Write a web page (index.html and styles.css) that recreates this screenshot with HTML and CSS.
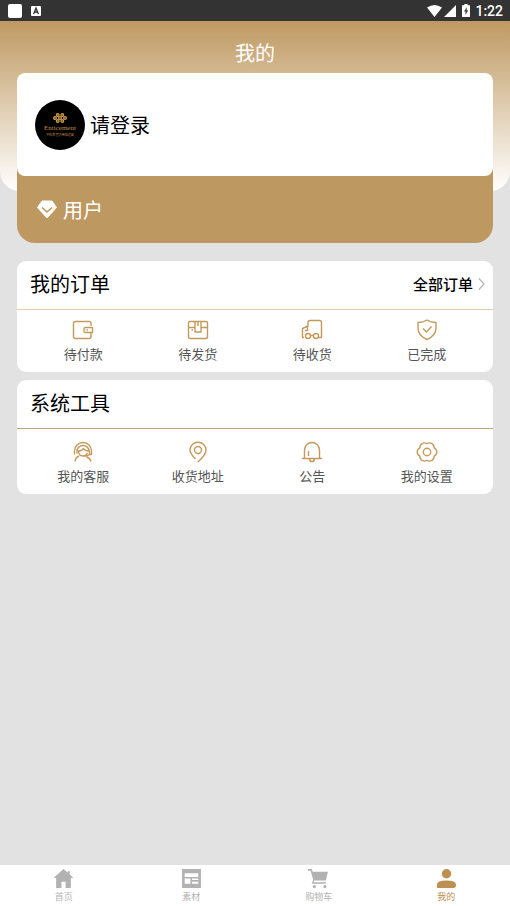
FILE: index.html
```html
<!DOCTYPE html>
<html lang="zh-CN">
<head>
<meta charset="utf-8">
<meta name="viewport" content="width=device-width, initial-scale=1">
<title>我的</title>
<link rel="stylesheet" href="styles.css">
</head>
<body>
<div class="status">
  <div class="status-group">
    <span class="status-app"></span>
    <svg width="10" height="10" viewBox="0 0 10 10"><rect width="10" height="10" rx="1" fill="#fff"/><path d="M2.6 8 5 2l2.4 6M3.5 6h3" fill="none" stroke="#333" stroke-width="1.3"/></svg>
  </div>
  <div class="status-group status-right">
    <svg width="30" height="14" viewBox="0 0 30 14" fill="#fff"><path d="M0 3.6Q7.5-1.8 15 3.6L7.5 13ZM17 13 29 1v12Z"/></svg>
    <svg width="8" height="13" viewBox="0 0 8 13"><path d="M2.3 0h3.4v1.3H8V13H0V1.300h2.300Z" fill="#fff"/><path d="M5 3 2 7.500h1.700L3.200 11 6.200 6.500H4.500Z" fill="#333"/></svg>
    <span class="clock">1:22</span>
  </div>
</div>

<header class="hero"><h1>我的</h1></header>

<main>
  <section class="profile">
    <a class="login" href="#login">
      <span class="avatar">
        <svg width="14" height="10" viewBox="0 0 14 10" fill="#5a4018" stroke="#d0a050" stroke-width="1.1"><circle cx="4.700" cy="2" r="1.400"/><circle cx="9.300" cy="2" r="1.400"/><circle cx="2" cy="5" r="1.400"/><circle cx="7" cy="5" r="1.500"/><circle cx="12" cy="5" r="1.400"/><circle cx="4.700" cy="8" r="1.400"/><circle cx="9.300" cy="8" r="1.400"/></svg>
        <span class="brand">Enticement</span>
        <span class="brand-sub">中科美 官方商城运营</span>
      </span>
      <span>请登录</span>
    </a>
    <div class="level">
      <svg width="20" height="19" viewBox="0 0 20 19"><path d="M5 1h10l4.500 6.500L10 18 .5 7.500Z" fill="#fff" stroke="#fff" stroke-linejoin="round"/><path d="m5 7.500 5 4.500 5-4.500" fill="none" stroke="#bd9860" stroke-width="1.600"/></svg>
      <span>用户</span>
    </div>
  </section>

  <section class="card">
    <div class="card-head">
      <h2>我的订单</h2>
      <a class="more" href="#orders">全部订单
        <svg width="7" height="12" viewBox="0 0 7 12"><path d="m1 .5 5 5.500-5 5.500" fill="none" stroke="#b5b5b5" stroke-width="1.200"/></svg>
      </a>
    </div>
    <div class="grid">
      <a href="#pay"><svg class="icon" viewBox="0 0 22 22"><path d="M19 7V4.500Q19 2.500 17 2.500H3.500Q1.500 2.500 1.500 4.500v13Q1.500 19.500 3.500 19.500H17q2 0 2-2V14M13.500 8.500h7v5h-7q-1.500 0-1.500-1.500v-2q0-1.500 1.500-1.500ZM14.500 11h1.500"/></svg>待付款</a>
      <a href="#ship"><svg class="icon" viewBox="0 0 22 22"><path d="M3 2.500h16q1.500 0 1.500 1.500v14q0 1.500-1.500 1.500H3q-1.500 0-1.500-1.500V4Q1.500 2.500 3 2.500ZM1.500 8.500H8m6 0h6.500M8 2.500V13h6V2.500M11 2.500V7M4.500 11h1.500"/></svg>待发货</a>
      <a href="#receive"><svg class="icon" viewBox="0 0 22 22"><path d="M3 18.500H1.500V9.500L7 7V3.500Q7 1.500 9 1.500h9.500q2 0 2 2v15H18M9.800 16.500h2.400M6.500 7.500v4H4"/><circle cx="7" cy="17" r="2.500"/><circle cx="15" cy="17" r="2.500"/></svg>待收货</a>
      <a href="#done"><svg class="icon" viewBox="0 0 22 22"><path d="M11 1Q15 3.500 20 3.500V9q0 7.500-9 11.500Q2 16.500 2 9V3.500Q7 3.500 11 1ZM7 9.500l3.500 3.500L15.500 7.500"/></svg>已完成</a>
    </div>
  </section>

  <section class="card tools">
    <div class="card-head"><h2>系统工具</h2></div>
    <div class="grid">
      <a href="#service"><svg class="icon" viewBox="0 0 22 22"><path d="M2.500 13.500V10a8.500 8.500 0 0 1 17 0v3.500H17.500V10M5 12.500V10a6 5.500 0 0 1 12 0q-4 0-5.500-2.500Q10 10 6.500 10q0 5 4.500 5 3 0 4.500-3M17.500 13.500q-2 2-5.500 1.500M3 20.500q.5-4 4-5.500M14.500 16q3.500 1 4.500 4.500"/></svg>我的客服</a>
      <a href="#address"><svg class="icon" viewBox="0 0 22 22"><path d="M8.500 18Q3 12.500 3 9a8 7.800 0 0 1 16 0Q19 13.500 11 21"/><circle cx="11" cy="9" r="3.500"/></svg>收货地址</a>
      <a href="#notice"><svg class="icon" viewBox="0 0 22 22"><path d="M1 17.500h20M3.500 17.500V9a7.500 7.500 0 0 1 15 0v8.500M8.500 18q.5 2.700 2.500 2.700t2.500-2.700M7.500 10v5"/></svg>公告</a>
      <a href="#settings"><svg class="icon" viewBox="0 0 22 22"><path d="M11 2.800A4.500 4.500 0 0 1 18.100 6.900 4.500 4.500 0 0 1 18.100 15.100 4.500 4.500 0 0 1 11 19.200 4.500 4.500 0 0 1 3.900 15.100 4.500 4.500 0 0 1 3.900 6.900 4.500 4.500 0 0 1 11 2.800Z"/><circle cx="11" cy="11" r="3.700"/></svg>我的设置</a>
    </div>
  </section>
</main>

<nav class="tabs">
  <a href="#home"><svg viewBox="0 0 20 20"><path d="M10 1 .5 9.500H3V19h5v-6h4v6h5V9.500h2.500L16 6.300V3h-2v1.500Z"/></svg>首页</a>
  <a href="#material"><svg viewBox="0 0 20 20"><path fill-rule="evenodd" d="M1 1h18v18H1ZM3.500 5v3.500h13V5ZM3.500 10v5h5.500v-5ZM10.500 10v1.500h6V10ZM10.500 13v2h6v-2Z"/></svg>素材</a>
  <a href="#cart"><svg viewBox="0 0 20 20"><path d="M0 1h3.500l1 2.500H19L17 12H6l-.5 1.500H17V15H3.500L5 11.500 2.500 2.500H0Z"/><circle cx="6" cy="17.700" r="1.500"/><circle cx="16" cy="17.700" r="1.500"/></svg>购物车</a>
  <a class="active" href="#mine" aria-current="page"><svg viewBox="0 0 20 20"><circle cx="10" cy="5.500" r="4.500"/><path d="M1 19v-3q0-4 9-4t9 4v1q0 2-2 2Z"/></svg>我的</a>
</nav>
</body>
</html>
```
FILE: styles.css
```css
* {
  box-sizing: border-box;
}

body {
  margin: 0;
  min-height: 100vh;
  display: flex;
  flex-direction: column;
  background: #e2e2e2;
  color: #000;
  font-family: "Noto Sans CJK SC", sans-serif;
}

a {
  color: inherit;
  text-decoration: none;
}

h1,
h2 {
  margin: 0;
  font-size: 20px;
  line-height: 28px;
  font-weight: 400;
}

.status {
  height: 21px;
  padding: 0 7px 0 8px;
  display: flex;
  justify-content: space-between;
  background: #333;
  color: #fff;
}

.status-group {
  display: flex;
  align-items: center;
  gap: 9px;
}

.status-right {
  gap: 5px;
}

.status-app {
  width: 14px;
  height: 14px;
  border-radius: 2px;
  background: #fff;
}

.clock {
  font: 500 14px/20px Roboto, sans-serif;
}

.hero {
  height: 170px;
  padding-top: 18px;
  border-radius: 0 0 20px 20px;
  background: linear-gradient(#bf9961, #fff);
  color: #fff;
  text-align: center;
}

main {
  flex: 1;
  margin-top: -118px;
  padding: 0 17px;
}

.profile {
  margin-bottom: 18px;
  border-radius: 8px 8px 18px 18px;
  background: #bd9860;
  font-size: 20px;
}

.login {
  height: 103px;
  padding: 0 18px;
  display: flex;
  align-items: center;
  gap: 5px;
  border-radius: 8px;
  background: #fff;
}

.avatar {
  width: 50px;
  height: 50px;
  padding-top: 13px;
  display: flex;
  flex-direction: column;
  align-items: center;
  border-radius: 50%;
  background: #000;
  color: #c08a4c;
  white-space: nowrap;
}

.brand {
  font: 7px/10px "Liberation Serif", serif;
}

.brand-sub {
  font-size: 3px;
  line-height: 4px;
}

.level {
  height: 67px;
  padding: 0 20px;
  display: flex;
  align-items: center;
  gap: 6px;
  color: #fff;
}

.card {
  margin-bottom: 8px;
  border-radius: 9px;
  background: #fff;
}

.card-head {
  height: 49px;
  padding: 0 8px 3px 13px;
  display: flex;
  align-items: center;
  justify-content: space-between;
  border-bottom: 1px solid #dfceb4;
}

.tools .card-head {
  border-color: #b8a47f;
}

.more {
  display: flex;
  align-items: center;
  gap: 5px;
  font-size: 15px;
  line-height: 20px;
  font-weight: 500;
}

.grid {
  padding: 9px 9px 8px;
  display: grid;
  grid-template-columns: repeat(4, 1fr);
}

.tools .grid {
  padding-top: 12px;
}

.grid a {
  display: flex;
  flex-direction: column;
  align-items: center;
  gap: 3px;
  color: #555;
  font-size: 13px;
  line-height: 20px;
}

.icon {
  width: 22px;
  height: 22px;
  fill: none;
  stroke: #c39a5c;
  stroke-width: 1.4;
  stroke-linejoin: round;
}

.tabs {
  height: 41px;
  padding-top: 3px;
  display: grid;
  grid-template-columns: repeat(4, 1fr);
  background: #fff;
  color: #b2b2b2;
  font-size: 9px;
  line-height: 15px;
}

.tabs a {
  display: flex;
  flex-direction: column;
  align-items: center;
}

.tabs svg {
  width: 21px;
  height: 21px;
  fill: currentColor;
}

.tabs .active {
  color: #bd8f50;
}
```
